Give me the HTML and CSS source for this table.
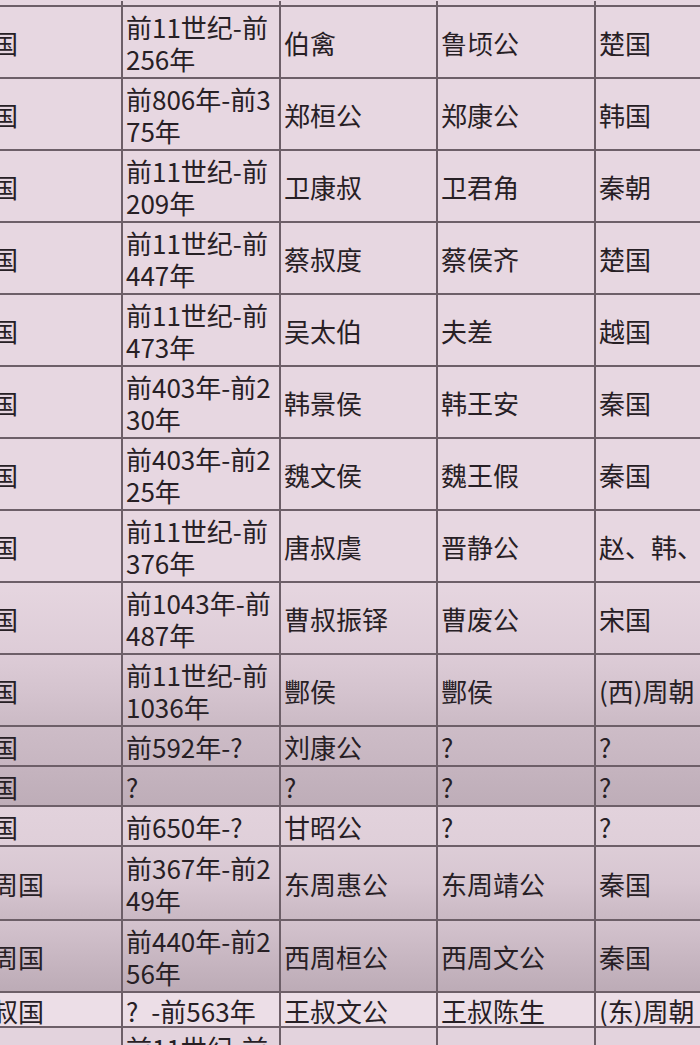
FILE: index.html
```html
<!DOCTYPE html>
<html lang="zh-CN">
<head>
<meta charset="utf-8">
<title>诸侯国表</title>
<link rel="stylesheet" href="styles.css">
</head>
<body>
<div class="page">
<table class="grid">
<colgroup>
<col class="c0"><col class="c1"><col class="c2"><col class="c3"><col class="c4">
</colgroup>
<tbody>
<tr class="stub"><td></td><td></td><td></td><td></td><td></td></tr>
<tr class="r2"><td>鲁国</td><td>前11世纪-前256年</td><td>伯禽</td><td>鲁顷公</td><td>楚国</td></tr>
<tr class="r2"><td>郑国</td><td>前806年-前375年</td><td>郑桓公</td><td>郑康公</td><td>韩国</td></tr>
<tr class="r2"><td>卫国</td><td>前11世纪-前209年</td><td>卫康叔</td><td>卫君角</td><td>秦朝</td></tr>
<tr class="r2"><td>蔡国</td><td>前11世纪-前447年</td><td>蔡叔度</td><td>蔡侯齐</td><td>楚国</td></tr>
<tr class="r2"><td>吴国</td><td>前11世纪-前473年</td><td>吴太伯</td><td>夫差</td><td>越国</td></tr>
<tr class="r2"><td>韩国</td><td>前403年-前230年</td><td>韩景侯</td><td>韩王安</td><td>秦国</td></tr>
<tr class="r2"><td>魏国</td><td>前403年-前225年</td><td>魏文侯</td><td>魏王假</td><td>秦国</td></tr>
<tr class="r2"><td>晋国</td><td>前11世纪-前376年</td><td>唐叔虞</td><td>晋静公</td><td>赵、韩、魏</td></tr>
<tr class="r2 s1"><td>曹国</td><td>前1043年-前487年</td><td>曹叔振铎</td><td>曹废公</td><td>宋国</td></tr>
<tr class="r2 s2"><td>酆国</td><td>前11世纪-前1036年</td><td>酆侯</td><td>酆侯</td><td>(西)周朝</td></tr>
<tr class="r1 s3"><td>刘国</td><td>前592年-?</td><td>刘康公</td><td>?</td><td>?</td></tr>
<tr class="r1 s4"><td>原国</td><td>?</td><td>?</td><td>?</td><td>?</td></tr>
<tr class="r1 s5"><td>甘国</td><td>前650年-?</td><td>甘昭公</td><td>?</td><td>?</td></tr>
<tr class="r2b s6"><td>东周国</td><td>前367年-前249年</td><td>东周惠公</td><td>东周靖公</td><td>秦国</td></tr>
<tr class="r2 s7"><td>西周国</td><td>前440年-前256年</td><td>西周桓公</td><td>西周文公</td><td>秦国</td></tr>
<tr class="r1s s8"><td>王叔国</td><td>?&ensp;-前563年</td><td>王叔文公</td><td>王叔陈生</td><td>(东)周朝</td></tr>
<tr class="r2 s9"><td>燕国</td><td>前11世纪-前222年</td><td>召公奭</td><td>燕王喜</td><td>秦国</td></tr>
</tbody>
</table>
</div>
</body>
</html>
```

FILE: styles.css
```css
html, body {
  margin: 0;
  padding: 0;
}
body {
  width: 700px;
  height: 1045px;
  overflow: hidden;
  background: #e7d7e1;
  font-family: "Noto Sans CJK SC", "Noto Sans", sans-serif;
  color: #272025;
}
.page {
  width: 700px;
  height: 1045px;
  overflow: hidden;
}
.grid {
  margin-left: -39px;
  margin-top: 1px;
  border-collapse: collapse;
  table-layout: fixed;
  width: 793px;
  background: #e7d7e1;
}
.c0 { width: 160px; }
.c1 { width: 158px; }
.c2 { width: 157px; }
.c3 { width: 158px; }
.c4 { width: 160px; }
.grid td {
  border: 2px solid #6d5f68;
  padding: 2px 3px 0 3px;
  font-size: 26px;
  line-height: 32px;
  vertical-align: middle;
  word-break: break-all;
  overflow: hidden;
  white-space: normal;
}
.grid tr.stub td {
  height: 4px;
  padding: 0;
  line-height: 4px;
  border-top: none;
}
.grid tr.r2 td { height: 68px; }
.grid tr.r2b td { height: 70px; }
.grid tr.r1 td { height: 36px; line-height: 30px; }
.grid tr.r1s td { height: 31px; line-height: 30px; }

.grid td:last-child { white-space: nowrap; }

.s1 { background: linear-gradient(#e6d6e0, #ddccd7); }
.s2 { background: linear-gradient(#ddccd7, #d4c3ce 55%, #cbbac5); }
.s3 { background: linear-gradient(#cdbcc7, #c7b6c1); }
.s4 { background: linear-gradient(#c5b4bf, #beadb8); }
.s5 { background: linear-gradient(#e2d2dc, #dfcfd9); }
.s6 { background: linear-gradient(#ddcdd7, #d7c6d1 50%, #c9b8c3); }
.s7 { background: linear-gradient(#d4c3ce, #c8b7c2 50%, #bcabb6); }
.s8 { background: #ecdee7; }
.s9 { background: #e3d3dd; }
```
